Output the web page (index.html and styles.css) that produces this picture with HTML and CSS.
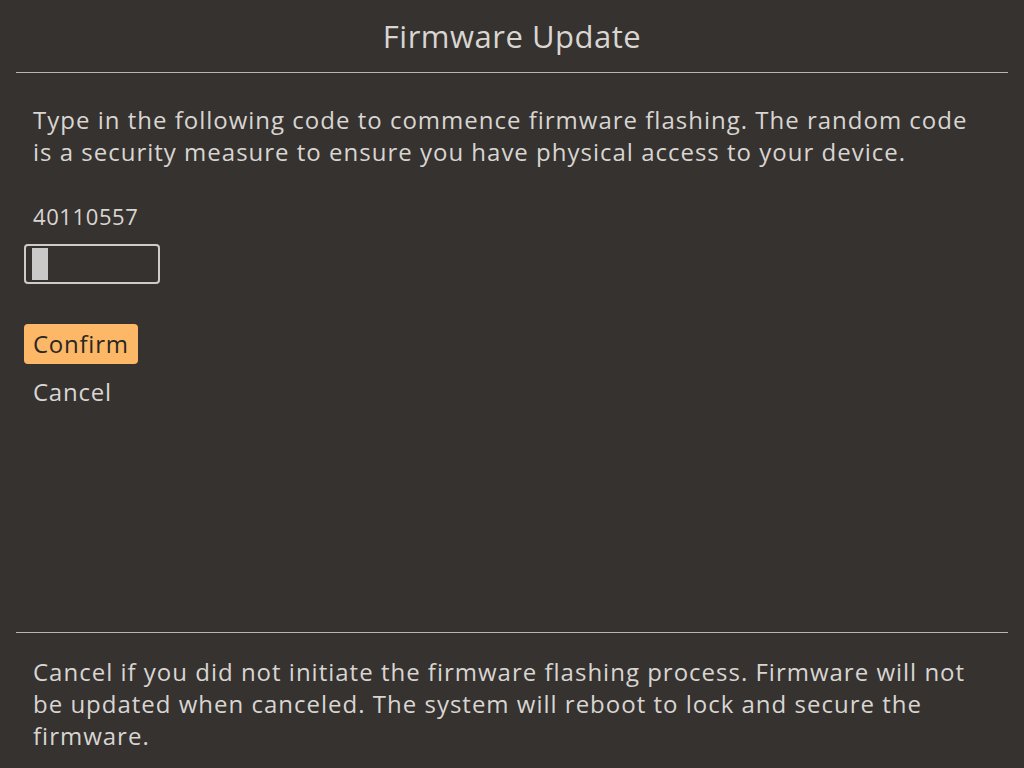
FILE: index.html
```html
<!DOCTYPE html>
<html>
<head>
<meta charset="utf-8">
<link rel="stylesheet" href="styles.css">
</head>
<body>
<div class="screen">
  <header class="title-bar"><h1 class="title">Firmware Update</h1></header>
  <main class="content">
    <p class="intro">Type in the following code to commence firmware flashing. The random code is a security measure to ensure you have physical access to your device.</p>
    <div class="code">40110557</div>
    <div class="input"><span class="cursor"></span></div>
    <div class="menu">
      <div class="item selected">Confirm</div>
      <div class="item">Cancel</div>
    </div>
  </main>
  <footer class="footer"><p class="note">Cancel if you did not initiate the firmware flashing process. Firmware will not be updated when canceled. The system will reboot to lock and secure the firmware.</p></footer>
</div>
</body>
</html>
```
FILE: styles.css
```css
html, body {
  margin: 0;
  padding: 0;
  background: #353230;
}
body {
  font-family: "Open Sans", "Noto Sans", sans-serif;
  color: #d9d5d1;
}
.screen {
  width: 1024px;
  height: 768px;
  display: flex;
  flex-direction: column;
  box-sizing: border-box;
  padding: 0 16px;
}
.title-bar {
  height: 72px;
  border-bottom: 1px solid #b9b5b1;
  display: flex;
  align-items: center;
  justify-content: center;
}
.title {
  margin: 0;
  font-size: 31px;
  font-weight: 400;
  line-height: 40px;
  letter-spacing: 0.5px;
}
.content {
  flex: 1;
  padding: 31px 8px 0;
}
.intro {
  margin: 0 0 0 9px;
  max-width: 945px;
  font-size: 24px;
  line-height: 32px;
  letter-spacing: 1px;
}
.code {
  margin: 32px 0 0 9px;
  font-size: 22px;
  line-height: 32px;
  letter-spacing: 0.6px;
}
.input {
  margin-top: 12px;
  width: 136px;
  height: 40px;
  box-sizing: border-box;
  border: 2px solid #cfcbc8;
  border-radius: 4px;
  padding: 2px 6px;
}
.cursor {
  display: block;
  width: 16px;
  height: 32px;
  background: #cbc9c8;
}
.menu {
  margin-top: 40px;
  display: flex;
  flex-direction: column;
  align-items: flex-start;
  gap: 8px;
}
.item {
  font-size: 24px;
  line-height: 40px;
  padding: 0 9px;
  border-radius: 4px;
  letter-spacing: 0.75px;
}
.item.selected {
  background: #fdb867;
  color: #2a2624;
}
.footer {
  border-top: 1px solid #b9b5b1;
  height: 136px;
  box-sizing: border-box;
  padding: 23px 17px 0;
}
.note {
  margin: 0;
  max-width: 945px;
  font-size: 24px;
  line-height: 32px;
  letter-spacing: 1px;
}
```
